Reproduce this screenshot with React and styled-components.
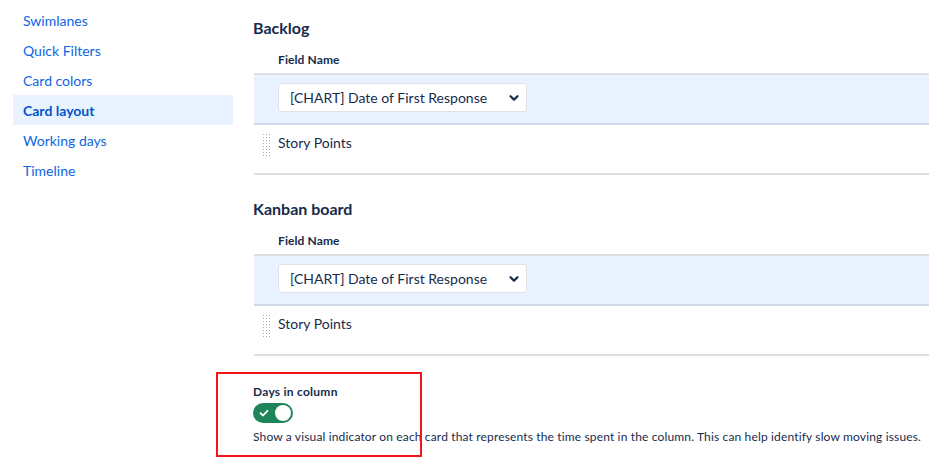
import React from "react";
import styled, { createGlobalStyle } from "styled-components";

const Global = createGlobalStyle`
  html, body { margin: 0; padding: 0; background: #fff; }
  body {
    font-family: "Lato", "Noto Sans", "Liberation Sans", sans-serif;
    color: #172b4d;
    -webkit-font-smoothing: antialiased;
  }
`;

const Page = styled.div`
  display: flex;
  width: 929px;
  height: 471px;
  overflow: hidden;
`;

const Sidebar = styled.nav`
  display: flex;
  flex-direction: column;
  width: 220px;
  padding: 5px 0 0 13px;
  flex: none;
`;

const NavItem = styled.a`
  display: flex;
  align-items: center;
  height: 30px;
  padding-left: 10px;
  font-size: 14px;
  color: ${(p) => (p.$active ? "#0055cc" : "#0c66e4")};
  font-weight: ${(p) => (p.$active ? 700 : 400)};
  background: ${(p) => (p.$active ? "#e9f2ff" : "transparent")};
  text-decoration: none;
  cursor: pointer;
`;

const Main = styled.main`
  flex: 1;
  min-width: 0;
  margin-left: 20px;
  padding-top: 18px;
  display: flex;
  flex-direction: column;
`;

const Section = styled.section`
  display: flex;
  flex-direction: column;
  margin-bottom: ${(p) => p.$gap || 0}px;
`;

const Heading = styled.h3`
  margin: 0 0 14px;
  font-size: 16px;
  line-height: 20px;
  font-weight: 700;
  color: #172b4d;
`;

const Table = styled.div`
  display: flex;
  flex-direction: column;
  margin-left: 1px;
  margin-right: -20px;
`;

const HeaderCell = styled.div`
  padding: 0 0 5px 24px;
  font-size: 12px;
  line-height: 16px;
  font-weight: 700;
  letter-spacing: 0.1px;
  color: #172b4d;
  border-bottom: 2px solid #dcdfe4;
`;

const Row = styled.div`
  display: flex;
  align-items: flex-start;
  height: 48px;
  box-sizing: content-box;
  padding: 0;
  background: ${(p) => (p.$selected ? "#e9f2ff" : "#fff")};
  border-bottom: 2px solid ${(p) => (p.$selected ? "#cfd9e8" : "#dcdfe4")};
`;

const HandleCell = styled.div`
  width: 24px;
  flex: none;
  display: flex;
  justify-content: flex-start;
  padding: 8px 0 0 8px;
  box-sizing: border-box;
`;

const DragHandle = styled.span`
  display: block;
  width: 9px;
  height: 23px;
  background-image: radial-gradient(circle, #a5adba 0.8px, transparent 1px);
  background-size: 3px 3px;
`;

const Cell = styled.div`
  padding-top: 8px;
  font-size: 14px;
  line-height: 20px;
  color: #172b4d;
`;

const SelectBox = styled.div`
  display: flex;
  align-items: center;
  justify-content: space-between;
  width: 249px;
  height: 29px;
  box-sizing: border-box;
  padding: 0 6px 0 11px;
  background: #fff;
  border: 1px solid #dfe1e6;
  border-radius: 3px;
  font-size: 14px;
  color: #172b4d;
`;

const Chevron = () => (
  <svg width="12" height="12" viewBox="0 0 12 12">
    <path d="M2.5 4.2 L6 7.6 L9.5 4.2" fill="none" stroke="#172b4d" strokeWidth="2.2" strokeLinecap="round" strokeLinejoin="round" />
  </svg>
);

const DaysSection = styled.div`
  position: relative;
  display: flex;
  flex-direction: column;
  align-items: flex-start;
`;

const Label = styled.div`
  font-size: 12px;
  line-height: 16px;
  font-weight: 700;
  letter-spacing: 0.25px;
  color: #172b4d;
`;

const Toggle = styled.button`
  display: flex;
  align-items: center;
  justify-content: space-between;
  width: 40px;
  height: 20px;
  margin: 3px 0 6px;
  padding: 0 2px 0 6px;
  box-sizing: border-box;
  border: none;
  border-radius: 10px;
  background: #1f845a;
  cursor: pointer;
`;

const Knob = styled.span`
  width: 16px;
  height: 16px;
  border-radius: 50%;
  background: #fff;
`;

const Description = styled.p`
  margin: 0;
  font-size: 12px;
  line-height: 16px;
  letter-spacing: 0.15px;
  color: #172b4d;
  white-space: nowrap;
`;

const Annotation = styled.div`
  position: absolute;
  left: -37px;
  top: -12px;
  width: 206px;
  height: 85px;
  box-sizing: border-box;
  border: 2px solid #f5141a;
  pointer-events: none;
`;

const navItems = ["Swimlanes", "Quick Filters", "Card colors", "Card layout", "Working days", "Timeline"];

const FieldTable = () => (
  <Table>
    <HeaderCell>Field Name</HeaderCell>
    <Row $selected>
      <HandleCell />
      <Cell>
        <SelectBox>
          <span>[CHART] Date of First Response</span>
          <Chevron />
        </SelectBox>
      </Cell>
    </Row>
    <Row>
      <HandleCell>
        <DragHandle />
      </HandleCell>
      <Cell>Story Points</Cell>
    </Row>
  </Table>
);

export default function App() {
  return (
    <>
      <Global />
      <Page>
        <Sidebar>
          {navItems.map((n) => (
            <NavItem key={n} $active={n === "Card layout"}>
              {n}
            </NavItem>
          ))}
        </Sidebar>
        <Main>
          <Section $gap={24}>
            <Heading>Backlog</Heading>
            <FieldTable />
          </Section>
          <Section $gap={28}>
            <Heading>Kanban board</Heading>
            <FieldTable />
          </Section>
          <DaysSection>
            <Label>Days in column</Label>
            <Toggle aria-pressed="true">
              <svg width="10" height="10" viewBox="0 0 10 10">
                <path d="M1.5 5.2 L4 7.5 L8.5 2.8" fill="none" stroke="#fff" strokeWidth="1.8" strokeLinecap="round" strokeLinejoin="round" />
              </svg>
              <Knob />
            </Toggle>
            <Description>
              Show a visual indicator on each card that represents the time spent in the column. This can help identify slow moving issues.
            </Description>
            <Annotation />
          </DaysSection>
        </Main>
      </Page>
    </>
  );
}
